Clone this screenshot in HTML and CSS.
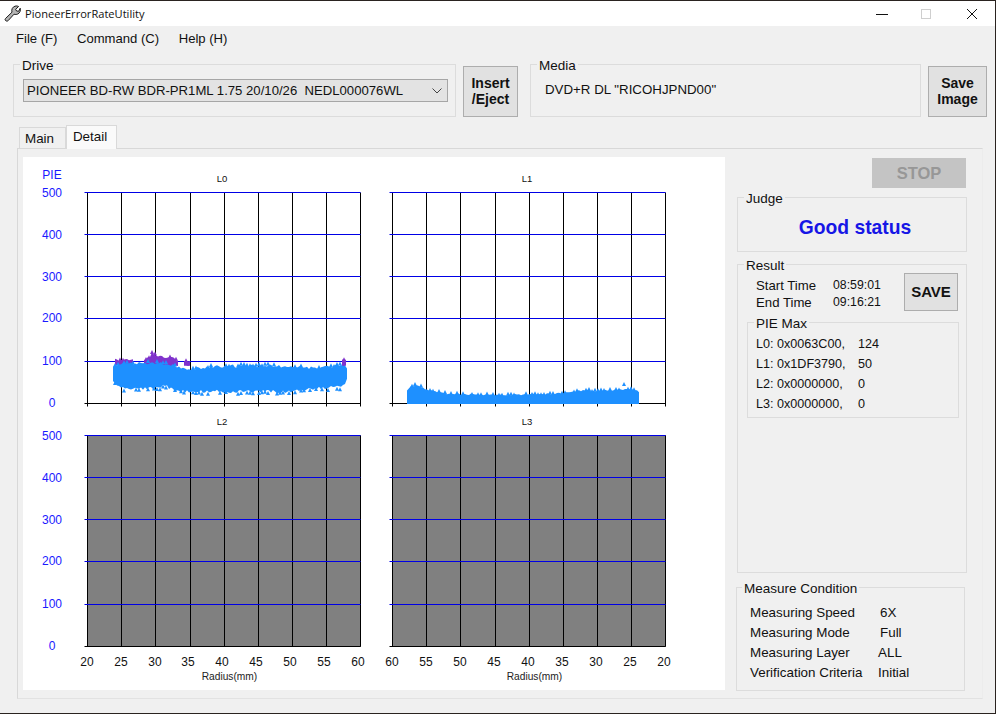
FILE: index.html
```html
<!DOCTYPE html>
<html lang="en">
<head>
    <meta charset="UTF-8">
    <meta name="viewport" content="width=device-width, initial-scale=1.0">
    <title>PioneerErrorRateUtility</title>
    <link rel="stylesheet" href="styles.css">
</head>
<body>

<div class="window">
    <!-- Title bar -->
    <div class="titlebar">
        <svg class="app-icon" width="17" height="17" viewBox="0 0 17 17">
            <path d="M1.5 13.5 L8 7.2 C7.2 4.6 8.4 2 11 1.2 C12.4 0.8 13.6 1 14.6 1.5 L11.6 4.3 L12.6 6 L14.6 6.3 L16.2 3.2 C16.8 5.6 16 7.8 13.8 9 C12.6 9.6 11.2 9.6 10 9.2 L4.2 15.6 C3.4 16.4 2.2 16.2 1.5 15.5 C0.9 14.9 0.9 14.1 1.5 13.5 Z" fill="#b4b4b4" stroke="#1c1c1c" stroke-width="1" stroke-linejoin="round"/>
        </svg>
        <span class="app-title">PioneerErrorRateUtility</span>
        <div class="win-controls">
            <svg width="12" height="12" viewBox="0 0 12 12"><path d="M0 6.5H12" stroke="#111" fill="none"/></svg>
            <svg class="win-max" width="10" height="10" viewBox="0 0 10 10"><rect x="0.5" y="0.5" width="9" height="9" stroke="#cfcfcf" fill="none"/></svg>
            <svg class="win-close" width="10" height="10" viewBox="0 0 10 10"><path d="M0 0L10 10M10 0L0 10" stroke="#111" fill="none"/></svg>
        </div>
    </div>

    <div class="menubar">
        <span>File (F)</span>
        <span>Command (C)</span>
        <span>Help (H)</span>
    </div>

    <!-- Drive and media -->
    <div class="toprow">
        <fieldset class="group drive-group">
            <legend>Drive</legend>
            <div class="drive-select">
                <span>PIONEER BD-RW BDR-PR1ML 1.75 20/10/26&nbsp;&nbsp;NEDL000076WL</span>
                <svg width="10" height="6" viewBox="0 0 10 6"><path d="M0.5 0.5L5 5L9.5 0.5" stroke="#444" fill="none"/></svg>
            </div>
        </fieldset>
        <button class="btn insert-btn">Insert<br>/Eject</button>
        <fieldset class="group media-group">
            <legend>Media</legend>
            <div class="media-name">DVD+R DL "RICOHJPND00"</div>
        </fieldset>
        <button class="btn image-btn">Save<br>Image</button>
    </div>

    <div class="tabs">
        <div class="tab">Main</div>
        <div class="tab tab-active">Detail</div>
    </div>

    <div class="panel">
        <!-- Charts are drawn by charts.js -->
        <div class="chart-area">
            <svg id="charts" width="702" height="533" viewBox="0 0 702 533"></svg>
        </div>

        <div class="side">
            <button class="btn stop-btn">STOP</button>

            <fieldset class="group judge-group">
                <legend>Judge</legend>
                <div class="judge-text">Good status</div>
            </fieldset>

            <fieldset class="group result-group">
                <legend>Result</legend>
                <div class="result-top">
                    <div class="times">
                        <div class="time-row"><span>Start Time</span><span class="num">08:59:01</span></div>
                        <div class="time-row"><span>End Time</span><span class="num">09:16:21</span></div>
                    </div>
                    <button class="btn save-btn">SAVE</button>
                </div>
                <fieldset class="group pie-group">
                    <legend>PIE Max</legend>
                    <div class="pie-rows">
                        <div class="pie-row"><span>L0: 0x0063C00,</span><span>124</span></div>
                        <div class="pie-row"><span>L1: 0x1DF3790,</span><span>50</span></div>
                        <div class="pie-row"><span>L2: 0x0000000,</span><span>0</span></div>
                        <div class="pie-row"><span>L3: 0x0000000,</span><span>0</span></div>
                    </div>
                </fieldset>
            </fieldset>

            <fieldset class="group measure-group">
                <legend>Measure Condition</legend>
                <div class="measure-rows">
                    <div class="measure-row"><span>Measuring Speed</span><span class="inset">6X</span></div>
                    <div class="measure-row"><span>Measuring Mode</span><span class="inset">Full</span></div>
                    <div class="measure-row"><span>Measuring Layer</span><span>ALL</span></div>
                    <div class="measure-row"><span>Verification Criteria</span><span>Initial</span></div>
                </div>
            </fieldset>
        </div>
    </div>
</div>

<script src="charts.js"></script>
</body>
</html>
```

FILE: styles.css
```css
/* General Reset */
* {
    margin: 0;
    padding: 0;
    box-sizing: border-box;
    font-family: 'Liberation Sans', Arial, sans-serif;
}

body {
    background: #2a2320;
    width: 996px;
    height: 714px;
    overflow: hidden;
}

.window {
    width: 995px;
    height: 712px;
    margin-top: 1px;
    background: #f0f0f0;
    color: #111;
    font-size: 13px;
    display: flex;
    flex-direction: column;
}

/* Title bar */
.titlebar {
    height: 25px;
    background: #fff;
    display: flex;
    align-items: center;
    padding-left: 4px;
    flex-shrink: 0;
}

.app-title {
    font-family: 'Open Sans', sans-serif;
    font-size: 11.1px;
    margin-left: 4px;
}

.win-controls {
    margin-left: auto;
    display: flex;
    align-items: center;
    padding-right: 18px;
}

.win-max {
    margin-left: 33px;
}

.win-close {
    margin-left: 36px;
}

.menubar {
    height: 24px;
    display: flex;
    align-items: center;
    gap: 19.5px;
    padding-left: 16px;
    font-size: 13.1px;
    flex-shrink: 0;
}

/* Group boxes */
.group {
    border: 1px solid #dcdcdc;
    min-width: 0;
}

.group legend {
    margin-left: 6px;
    padding: 3px 2px 0;
    font-size: 13.5px;
    line-height: 14px;
}

.btn {
    background: #e1e1e1;
    border: 1px solid #adadad;
    color: #111;
    font-weight: bold;
    font-size: 14px;
    line-height: 16px;
}

/* Top row */
.toprow {
    display: flex;
    height: 61px;
    margin: 6px 0 0 13px;
    flex-shrink: 0;
}

.drive-group {
    width: 443px;
}

.drive-select {
    height: 23px;
    margin: 6px 7px 0 9px;
    background: #e3e3e3;
    border: 1px solid #a6a6a6;
    display: flex;
    align-items: center;
    justify-content: space-between;
    padding: 0 5px 0 3px;
    font-size: 13.15px;
}

.insert-btn {
    width: 55px;
    height: 51px;
    margin: 10px 12px 0 7px;
    padding-bottom: 2px;
}

.media-group {
    width: 391px;
}

.media-name {
    padding: 9px 0 0 14px;
    font-size: 13.3px;
}

.image-btn {
    width: 59px;
    height: 51px;
    margin: 10px 0 0 7px;
    padding-bottom: 2px;
}

/* Tabs */
.tabs {
    display: flex;
    align-items: flex-end;
    height: 23px;
    margin-top: 8px;
    padding-left: 19px;
    flex-shrink: 0;
    position: relative;
    z-index: 1;
}

.tab {
    width: 47px;
    height: 21px;
    border: 1px solid #d9d9d9;
    border-bottom: none;
    padding-right: 6px;
    text-align: center;
    font-size: 13.4px;
    line-height: 22px;
}

.tab-active {
    width: 51px;
    height: 24px;
    margin-bottom: -1px;
    padding-right: 3px;
    background: #fafafa;
    line-height: 22px;
}

/* Main panel */
.panel {
    width: 966px;
    height: 551px;
    margin-left: 17px;
    border: 1px solid #d8d8d8;
    border-right-color: #ececec;
    border-bottom-color: #e2e2e2;
    display: flex;
    padding: 8px 0 0 5px;
}

.chart-area {
    width: 702px;
    height: 533px;
    background: #fff;
    flex-shrink: 0;
}

#charts {
    display: block;
}

.axis-num {
    font-size: 12px;
    fill: #111;
}

.axis-blue {
    font-size: 12px;
    fill: #1a1aff;
}

.chart-title {
    font-size: 9.5px;
    fill: #111;
}

.axis-name {
    font-size: 10.2px;
    fill: #222;
}

.line-black {
    stroke: #000;
    stroke-width: 1;
}

.line-blue {
    stroke: #0000e6;
    stroke-width: 1;
}

.plot-off {
    fill: #808080;
}

.cloud-blue {
    fill: #1e90ff;
}

.cloud-purple {
    fill: #8033cc;
}

/* Right column */
.side {
    width: 230px;
    margin-left: 12px;
    display: flex;
    flex-direction: column;
}

.stop-btn {
    width: 94px;
    height: 30px;
    margin: 1px 1px 0 auto;
    background: #c4c4c4;
    border-color: #c4c4c4;
    color: #979797;
    font-size: 16.5px;
}

.judge-group {
    height: 63px;
    margin-top: 1px;
}

.judge-text {
    text-align: center;
    color: #1616e6;
    font-weight: bold;
    font-size: 19.3px;
    line-height: 24px;
    padding: 10px 0 0 6px;
}

.result-group {
    height: 317px;
    margin-top: 4px;
}

.result-top {
    display: flex;
    justify-content: space-between;
    padding: 0 8px 0 18px;
}

.times {
    padding-top: 4px;
    font-size: 13.2px;
}

.time-row {
    display: grid;
    grid-template-columns: 77px auto;
    height: 17px;
    line-height: 17px;
}

.num {
    font-size: 12.3px;
}

.save-btn {
    width: 54px;
    height: 38px;
    font-size: 15px;
}

.pie-group {
    width: 212px;
    height: 104px;
    margin: 3px 0 0 9px;
}

.pie-rows {
    padding: 3px 0 0 8px;
    font-size: 12.6px;
}

.pie-row {
    display: grid;
    grid-template-columns: 102px auto;
    height: 20px;
    line-height: 20px;
}

.measure-group {
    width: 229px;
    height: 112px;
    margin: 6px 0 0 -1px;
}

.measure-group legend {
    margin-left: 5px;
}

.measure-rows {
    padding: 7px 0 0 13px;
    font-size: 13.4px;
}

.measure-row {
    display: grid;
    grid-template-columns: 128px auto;
    height: 20px;
    line-height: 20px;
}

.inset {
    padding-left: 2px;
}
```

FILE: charts.js
```js
// page position of the chart svg, so the numbers below read as screen pixels
const ORIGIN_X = 23, ORIGIN_Y = 157;
const PLOT_W = 273, PLOT_H = 211;
const svg = document.getElementById("charts");

let seed = 11;
function rnd() {
    seed = (seed * 16807) % 2147483647;
    return seed / 2147483647;
}

function add(tag, attrs, text) {
    let el = document.createElementNS("http://www.w3.org/2000/svg", tag);
    for (let k in attrs) el.setAttribute(k, attrs[k]);
    if (text !== undefined) el.textContent = text;
    svg.appendChild(el);
}

function line(x1, y1, x2, y2, cls) {
    add("line", {
        x1: x1 - ORIGIN_X + 0.5, y1: y1 - ORIGIN_Y + 0.5,
        x2: x2 - ORIGIN_X + 0.5, y2: y2 - ORIGIN_Y + 0.5,
        class: cls
    });
}

function label(x, y, str, cls) {
    add("text", {
        x: x - ORIGIN_X, y: y - ORIGIN_Y,
        class: cls, "text-anchor": "middle"
    }, str);
}

function interp(points, x) {
    for (let i = 1; i < points.length; i++) {
        if (x <= points[i][0]) {
            let a = points[i - 1], b = points[i];
            return a[1] + (b[1] - a[1]) * (x - a[0]) / (b[0] - a[0]);
        }
    }
    return points[points.length - 1][1];
}

// one scatter marker, a small triangle
function marker(x, y, cls) {
    let px = x - ORIGIN_X, py = y - ORIGIN_Y;
    add("polygon", {
        points: (px - 2) + "," + (py + 2) + " " + px + "," + (py - 2) + " " + (px + 2) + "," + (py + 2),
        class: cls
    });
}

// jagged band between two edges with loose markers along them
function cloud(top, bottom, amp, cls, bottomSpread) {
    let x1 = top[0][0], x2 = top[top.length - 1][0];
    let spread = bottomSpread === undefined ? 1 : bottomSpread;
    let up = [], down = [];
    for (let x = x1; x <= x2; x += 2) {
        up.push([x, interp(top, x) + (rnd() - 0.5) * amp * 2]);
        down.push([x, interp(bottom, x) + (rnd() - 0.5) * amp * 2 * spread]);
    }
    let pts = up.concat(down.reverse());
    let d = pts.map(p => (p[0] - ORIGIN_X) + "," + (p[1] - ORIGIN_Y).toFixed(1)).join(" ");
    add("polygon", { points: d, class: cls });

    for (let x = x1 + 2; x <= x2 - 2; x += 3) {
        if (rnd() < 0.55) marker(x, interp(top, x) - rnd() * amp * 1.6, cls);
        if (spread > 0 && rnd() < 0.55) marker(x, interp(bottom, x) + rnd() * amp * 1.6, cls);
    }
}

function drawChart(left, top, title, xLabels, xPos, hasData) {
    let xs = [0, 34, 68, 103, 137, 171, 205, 239, 273];
    let ys = [0, 42, 84, 126, 169, 211];

    label(left + 135, top - 10, title, "chart-title");

    if (!hasData) {
        add("rect", {
            x: left - ORIGIN_X, y: top - ORIGIN_Y,
            width: PLOT_W + 1, height: PLOT_H + 1, class: "plot-off"
        });
    }

    xs.forEach(dx => {
        line(left + dx, top, left + dx, top + PLOT_H + (hasData ? 3 : 0), "line-black");
    });
    ys.forEach((dy, i) => {
        let cls = i === ys.length - 1 ? "line-black" : "line-blue";
        line(left - 3, top + dy, left + PLOT_W, top + dy, cls);
    });

    if (xLabels) {
        xLabels.forEach((t, i) => {
            label(left + xPos[i], top + PLOT_H + 20, t, "axis-num");
        });
        label(left + 142.5, top + PLOT_H + 34, "Radius(mm)", "axis-name");
    }
}

function yLabels(top) {
    ["500", "400", "300", "200", "100", "0"].forEach((t, i) => {
        label(52, top + [5, 47, 89, 130, 173, 215][i], t, "axis-blue");
    });
}

label(52, 179, "PIE", "axis-blue");
yLabels(192);
yLabels(435);

drawChart(87, 192, "L0", null, null, true);
drawChart(392, 192, "L1", null, null, true);
drawChart(87, 435, "L2", ["20", "25", "30", "35", "40", "45", "50", "55", "60"],
          [0, 34, 68, 101, 135, 169, 203, 237, 271], false);
drawChart(392, 435, "L3", ["60", "55", "50", "45", "40", "35", "30", "25", "20"],
          [0, 34, 68, 102, 136, 170, 204, 238, 272], false);

// L0 data, purple tops first so the blue sits over them
cloud([[115, 360], [133, 360]], [[115, 366], [133, 366]], 1.2, "cloud-purple");
cloud([[144, 360], [149, 358], [152, 353], [156, 355], [162, 357], [172, 357], [178, 360]],
      [[144, 366], [178, 366]], 1.2, "cloud-purple");
cloud([[184, 361], [190, 361]], [[184, 366], [190, 366]], 0.6, "cloud-purple");
cloud([[342, 360], [345, 359], [347, 361]], [[342, 366], [347, 366]], 0.6, "cloud-purple");
cloud([[113, 368], [116, 364], [150, 363], [170, 364], [180, 368], [190, 369], [220, 366],
       [240, 366], [270, 366], [300, 367], [320, 368], [343, 365], [347, 367]],
      [[113, 380], [118, 387], [130, 389], [150, 388], [165, 386], [175, 390], [190, 392],
       [220, 391], [235, 392], [260, 391], [280, 392], [300, 390], [320, 388], [340, 387],
       [345, 383], [347, 378]], 1.6, "cloud-blue");

// L1 data, sits on the axis so only the top edge is loose
cloud([[407, 390], [410, 387], [416, 385], [424, 388], [432, 391], [450, 394], [500, 395],
       [555, 394], [572, 392], [586, 390], [592, 391], [630, 389], [637, 390], [640, 392]],
      [[407, 404], [640, 404]], 0.9, "cloud-blue", 0);
marker(624, 384, "cloud-blue");
```
